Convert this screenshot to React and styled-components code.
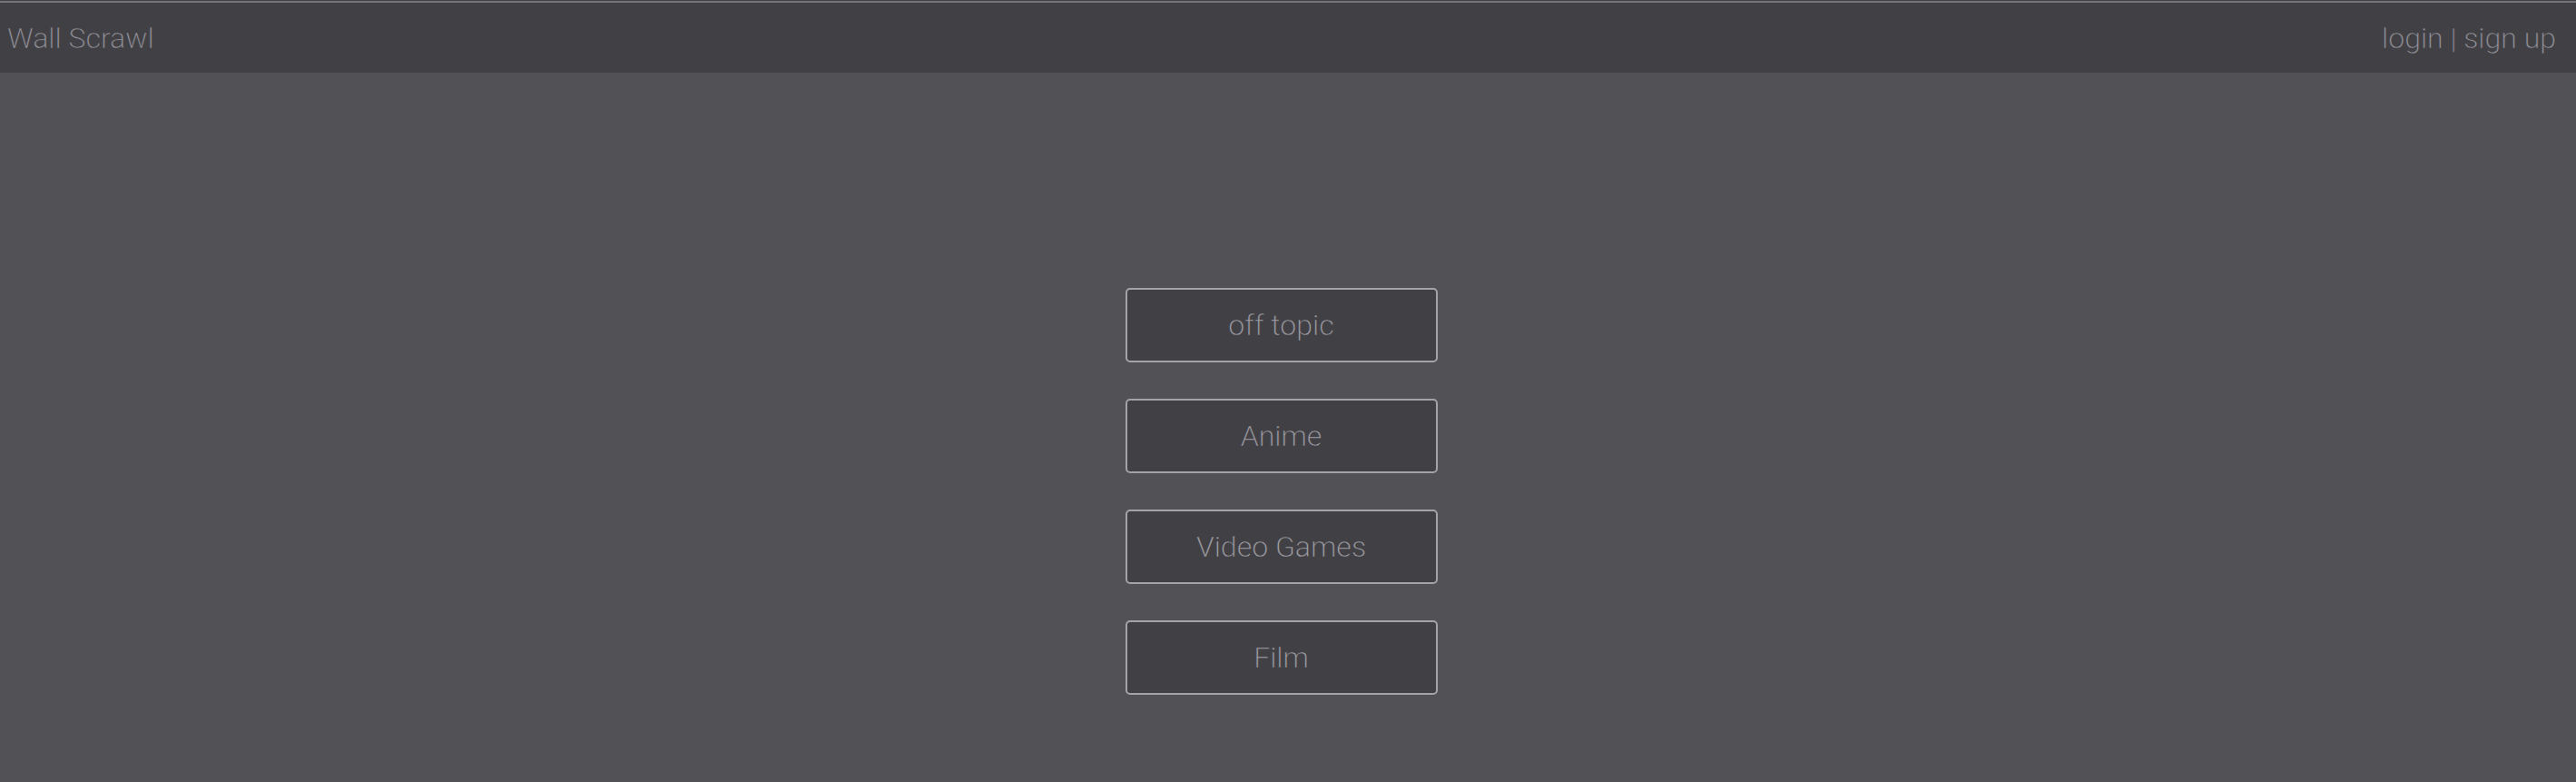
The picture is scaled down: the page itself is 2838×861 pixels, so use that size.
import React from "react";
import styled, { createGlobalStyle } from "styled-components";

const Global = createGlobalStyle`
  html, body { margin: 0; padding: 0; background: #414045; }
  body { font-family: "Roboto Light", Roboto, "Liberation Sans", sans-serif; font-weight: 300; }
  * { box-sizing: border-box; }
`;

const Page = styled.div`
  padding-top: 1px;
  min-height: 100vh;
  display: flex;
  flex-direction: column;
  background: #414045;
`;

const Header = styled.header`
  height: 79px;
  border-top: 2px solid #75747a;
  background: #414045;
  display: flex;
  align-items: center;
  justify-content: space-between;
  padding: 0 22px 0 8px;
  color: #97969e;
  font-size: 32px;
  -webkit-text-stroke: 0.5px #414045;
`;

const Brand = styled.div``;

const Auth = styled.div`
  display: flex;
  gap: 0.24em;
`;

const AuthLink = styled.a`
  color: inherit;
  text-decoration: none;
  cursor: pointer;
`;

const Main = styled.main`
  flex: 1;
  background: #525156;
  display: flex;
  flex-direction: column;
  align-items: center;
  gap: 40px;
  padding: 237px 15px 0 0;
`;

const Board = styled.a`
  width: 344px;
  height: 82px;
  border: 2px solid #a4a3a9;
  border-radius: 5px;
  background: #414045;
  color: #a5a4ab;
  font-size: 32px;
  -webkit-text-stroke: 0.5px #414045;
  display: flex;
  align-items: center;
  justify-content: center;
  text-decoration: none;
  cursor: pointer;
`;

const boards = ["off topic", "Anime", "Video Games", "Film"];

export default function App() {
  return (
    <>
      <Global />
      <Page>
        <Header>
          <Brand>Wall Scrawl</Brand>
          <Auth>
            <AuthLink>login</AuthLink>
            <span>|</span>
            <AuthLink>sign up</AuthLink>
          </Auth>
        </Header>
        <Main>
          {boards.map((b) => (
            <Board key={b}>{b}</Board>
          ))}
        </Main>
      </Page>
    </>
  );
}
